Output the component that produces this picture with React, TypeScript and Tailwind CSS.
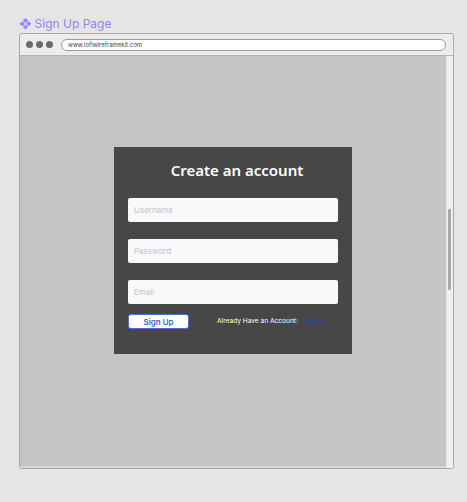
const App = () => {
  return (
    <div className="w-[467px] h-[502px] bg-[#e5e5e5] pt-[15px] pl-[19px] font-['Inter','Noto_Sans',sans-serif]">
      <div className="flex items-center gap-[3px] h-[18px] text-[12px] text-[#9483f7] leading-none">
        <span className="text-[12px]">❖</span>
        <span>Sign Up Page</span>
      </div>
      <div className="w-[435px] h-[436px] border border-[#a9a9a9] rounded-[3px] bg-[#ececec] flex flex-col overflow-hidden">
        <div className="h-[22px] flex items-center pl-[6px] pr-[7px] border-b border-[#b4b4b4] shrink-0">
          <div className="flex gap-[3px]">
            <span className="w-[7px] h-[7px] rounded-full bg-[#6b6b6b]" />
            <span className="w-[7px] h-[7px] rounded-full bg-[#6b6b6b]" />
            <span className="w-[7px] h-[7px] rounded-full bg-[#6b6b6b]" />
          </div>
          <div className="ml-[8px] flex-1 h-[12px] rounded-full border border-[#9a9a9a] bg-white flex items-center pl-[6px] text-[6px] text-[#444] leading-none">
            www.lofiwireframekit.com
          </div>
        </div>
        <div className="flex-1 flex">
          <div className="flex-1 bg-[#c4c4c4] flex flex-col items-center pt-[91px] border-b-2 border-[#d8d8d8]">
            <div className="w-[238px] h-[207px] bg-[#474747] px-[14px] pt-[13px] flex flex-col">
              <h1 className="pl-[8px] text-center text-white text-[15px] leading-[20px] font-semibold font-['Noto_Sans',sans-serif]">
                Create an account
              </h1>
              <div className="flex flex-col gap-[17px] mt-[18px]">
                <input
                  placeholder="Username"
                  className="h-[24px] w-full rounded-[2px] bg-[#f8f9fb] px-[6px] text-[8px] outline-none placeholder:text-[#c3c3cc]"
                />
                <input
                  placeholder="Password"
                  className="h-[24px] w-full rounded-[2px] bg-[#f8f9fb] px-[6px] text-[8px] outline-none placeholder:text-[#c3c3cc]"
                />
                <input
                  placeholder="Email"
                  className="h-[24px] w-full rounded-[2px] bg-[#f8f9fb] px-[6px] text-[8px] outline-none placeholder:text-[#c3c3cc]"
                />
              </div>
              <div className="flex items-center mt-[10px]">
                <button className="w-[61px] h-[15px] rounded-[3px] bg-white border border-[#4a6fd6] text-[#3b5fcb] text-[8px] font-semibold leading-none">
                  Sign Up
                </button>
                <span className="ml-[28px] text-[6.6px] text-white leading-none">Already Have an Account:</span>
                <span className="ml-[7px] text-[6.6px] text-[#1d46c9] leading-none">Log In</span>
              </div>
            </div>
          </div>
          <div className="w-[7px] bg-[#efefef] border-l border-[#e2e2e2] pt-[153px]">
            <div className="ml-[1px] w-[3px] h-[81px] bg-[#a9a9a9] rounded-[1px]" />
          </div>
        </div>
      </div>
    </div>
  );
};

export default App;
